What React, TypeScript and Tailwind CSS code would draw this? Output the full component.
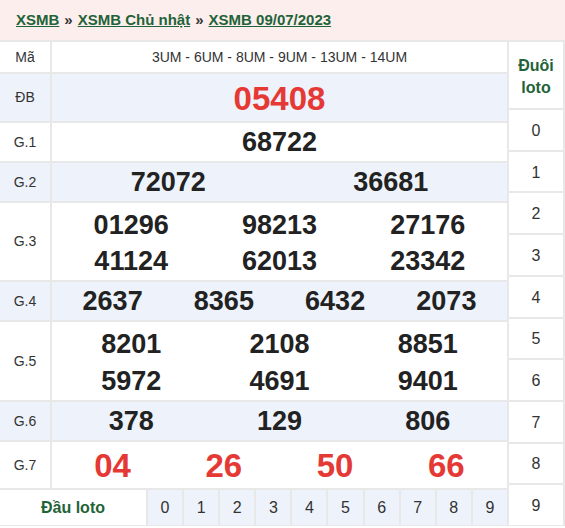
import React from "react"

const font = { fontFamily: '"Liberation Sans", Arial, sans-serif' }

type RowProps = {
  label: string
  blue?: boolean
  height: string
  lines: string[][]
  red?: boolean
  lineHeight?: string
}

function PrizeRow({ label, blue, height, lines, red, lineHeight = "h-[38px]" }: RowProps) {
  const bg = blue ? "bg-[#eef2fa]" : "bg-white"
  const multi = lines.length > 1
  return (
    <div className={`flex gap-[2px] ${height}`}>
      <div className={`flex w-[50px] shrink-0 items-center justify-center text-[14px] text-[#333] ${bg}`}>{label}</div>
      <div className={`flex flex-1 flex-col justify-center px-[5px] ${multi ? "pt-[4px]" : "pt-[1px]"} ${bg}`}>
        {lines.map((line, i) => (
          <div key={i} className={`flex items-center ${lineHeight}`}>
            {line.map((num, j) => (
              <div
                key={j}
                className={`flex-1 text-center font-bold leading-none ${
                  red ? "text-[33px] text-[#e53935]" : "text-[27px] text-[#222]"
                }`}
              >
                {num}
              </div>
            ))}
          </div>
        ))}
      </div>
    </div>
  )
}

export default function App() {
  const digits = ["0", "1", "2", "3", "4", "5", "6", "7", "8", "9"]

  return (
    <div className="h-[528px] w-[565px] overflow-hidden bg-white" style={font}>
      <div className="flex h-[40px] items-center bg-[#fdeeee] pl-4 text-[15px] font-bold">
        <a className="text-[#1f6338] underline">XSMB</a>
        <span className="mx-[5px] text-[#333]">»</span>
        <a className="text-[#1f6338] underline">XSMB Chủ nhật</a>
        <span className="mx-[5px] text-[#333]">»</span>
        <a className="text-[#1f6338] underline">XSMB 09/07/2023</a>
      </div>

      <div className="flex gap-[2px] bg-[#e8e8e8] pr-[2px] pt-[2px] pb-[1px]">
        <div className="flex flex-1 flex-col gap-[2px]">
          <div className="flex h-[30px] gap-[2px]">
            <div className="flex w-[50px] shrink-0 items-center justify-center bg-white text-[14px] text-[#333]">Mã</div>
            <div className="flex flex-1 items-center justify-center bg-white text-[14px] text-[#333]">
              3UM - 6UM - 8UM - 9UM - 13UM - 14UM
            </div>
          </div>
          <PrizeRow label="ĐB" blue height="h-[47px]" lines={[["05408"]]} red />
          <PrizeRow label="G.1" height="h-[38px]" lines={[["68722"]]} />
          <PrizeRow label="G.2" blue height="h-[38px]" lines={[["72072", "36681"]]} />
          <PrizeRow
            label="G.3"
            height="h-[77px]"
            lines={[
              ["01296", "98213", "27176"],
              ["41124", "62013", "23342"],
            ]}
          />
          <PrizeRow label="G.4" blue height="h-[38px]" lines={[["2637", "8365", "6432", "2073"]]} />
          <PrizeRow
            label="G.5"
            height="h-[78px]"
            lineHeight="h-[40px]"
            lines={[
              ["8201", "2108", "8851"],
              ["5972", "4691", "9401"],
            ]}
          />
          <PrizeRow label="G.6" blue height="h-[38px]" lines={[["378", "129", "806"]]} />
          <PrizeRow label="G.7" height="h-[46px]" lines={[["04", "26", "50", "66"]]} red />
          <div className="flex h-[35px] gap-[2px]">
            <div className="flex w-[146px] shrink-0 items-center justify-center bg-white text-[16px] font-bold text-[#1f6338]">
              Đầu loto
            </div>
            {digits.map((d) => (
              <div key={d} className="flex flex-1 items-center justify-center bg-[#eef2fa] text-[16px] text-[#333]">
                {d}
              </div>
            ))}
          </div>
        </div>

        <div className="flex w-[54px] shrink-0 flex-col gap-[2px]">
          <div className="flex h-[66px] flex-col items-center justify-center bg-white pt-[4px] text-[16px] font-bold leading-[22px] text-[#1f6338]">
            <span>Đuôi</span>
            <span>loto</span>
          </div>
          {digits.map((d) => (
            <div key={d} className="flex flex-1 items-center justify-center bg-white pt-[2px] text-[16px] text-[#333]">
              {d}
            </div>
          ))}
        </div>
      </div>
    </div>
  )
}
